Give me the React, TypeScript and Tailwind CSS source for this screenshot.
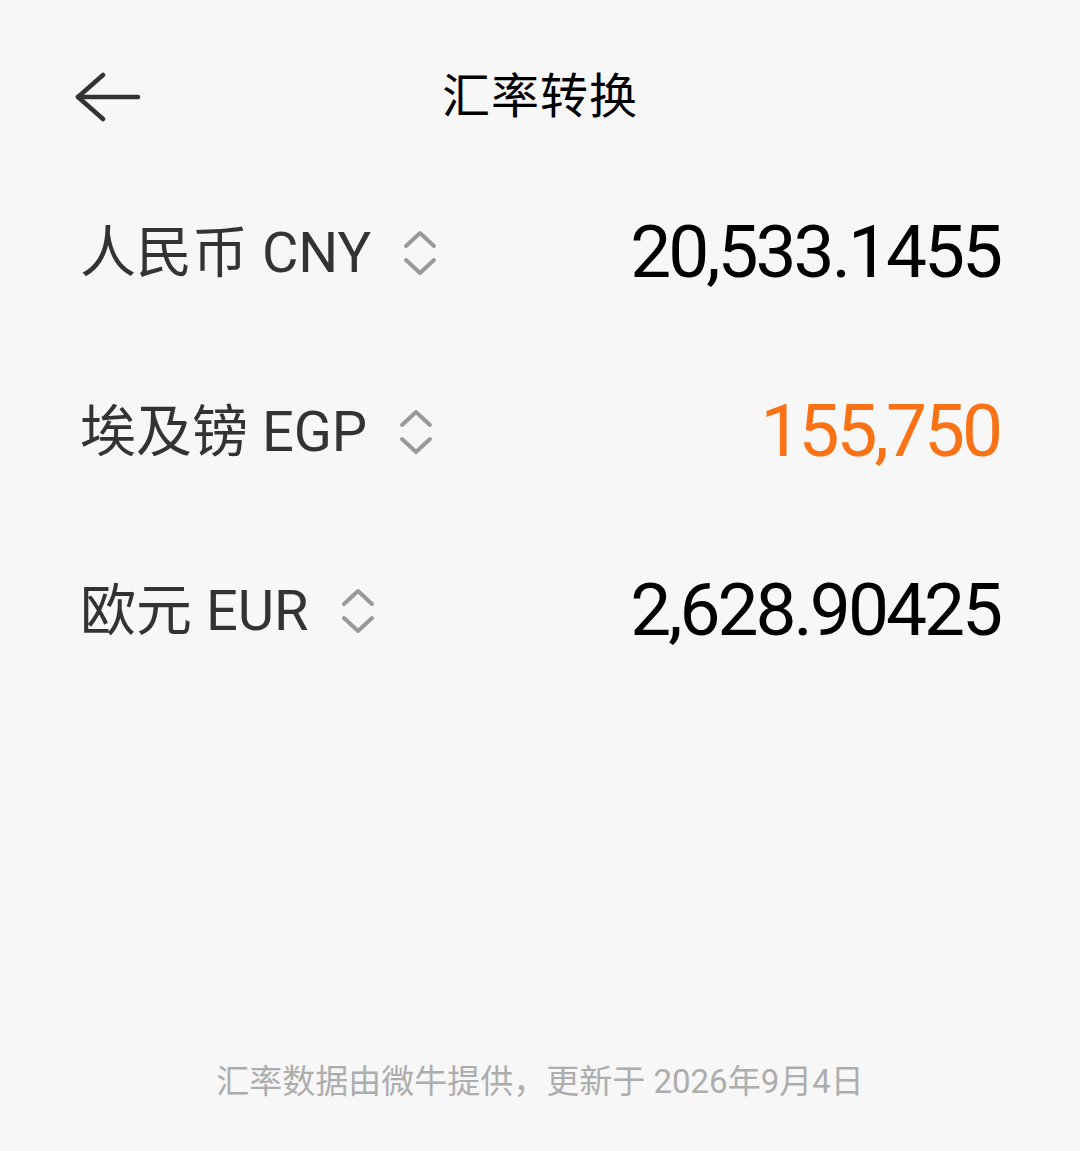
import React from "react";

const rows = [
  { label: "人民币 CNY", value: "20,533.1455", active: false },
  { label: "埃及镑 EGP", value: "155,750", active: true },
  { label: "欧元 EUR", value: "2,628.90425", active: false },
];

function BackArrow() {
  return (
    <svg width="68" height="50" viewBox="0 0 68 50" fill="none" stroke="#333" strokeWidth="4.5" strokeLinecap="round" strokeLinejoin="round">
      <path d="M3 25 H63" />
      <path d="M28 3 L3 25 L28 47" />
    </svg>
  );
}

function SortIcon() {
  return (
    <svg width="34" height="46" viewBox="0 0 34 46" fill="none" stroke="#999" strokeWidth="4" strokeLinecap="round" strokeLinejoin="round">
      <path d="M3 16 L17 3 L31 16" />
      <path d="M3 30 L17 43 L31 30" />
    </svg>
  );
}

export default function App() {
  return (
    <div
      className="min-h-[1151px] w-full bg-[#f7f7f7] flex flex-col"
      style={{ fontFamily: "Roboto, 'Noto Sans CJK SC', sans-serif" }}
    >
      <header className="relative h-[163px] pt-[31px] flex items-center justify-center">
        <button className="absolute left-[75px] top-[72px]">
          <BackArrow />
        </button>
        <h1 className="text-[48px] font-normal text-black tracking-[1px]">汇率转换</h1>
      </header>

      <div className="flex flex-col px-[80px]">
        {rows.map((r) => (
          <div key={r.label} className="h-[179px] flex items-center justify-between">
            <div className="flex items-center gap-[32px]">
              <span className="text-[56px] text-[#333]">{r.label}</span>
              <SortIcon />
            </div>
            <span
              className={`text-[73px] tracking-[-3px] ${r.active ? "text-[#f97316]" : "text-black"}`}
            >
              {r.value}
            </span>
          </div>
        ))}
      </div>

      <footer className="mt-auto pb-[45px] text-center text-[33px] text-[#adadad]">
        汇率数据由微牛提供，更新于 2026年9月4日
      </footer>
    </div>
  );
}
